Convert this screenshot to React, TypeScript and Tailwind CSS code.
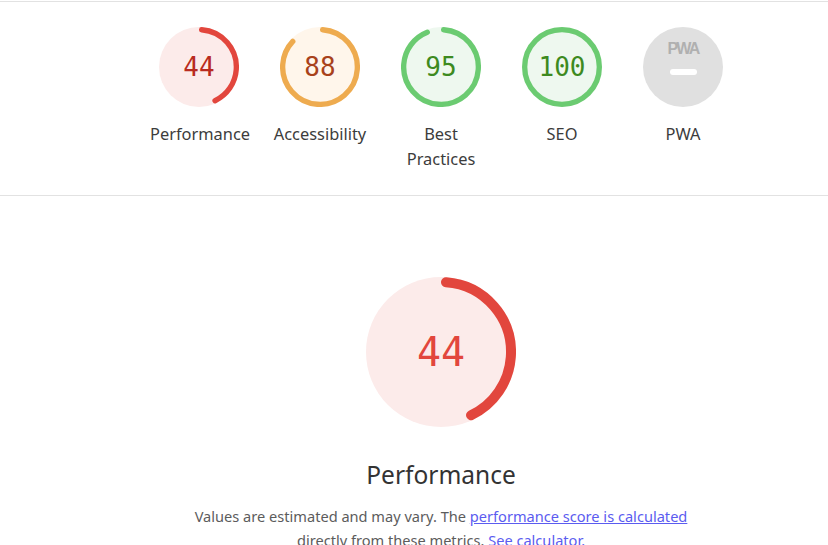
const scores = [
  { label: "Performance", score: 44, tone: "fail" },
  { label: "Accessibility", score: 88, tone: "average" },
  { label: "Best Practices", score: 95, tone: "pass" },
  { label: "SEO", score: 100, tone: "pass" },
];

const tones: Record<string, { arc: string; fill: string; text: string }> = {
  fail: { arc: "#e2463d", fill: "#fcebea", text: "#b92b20" },
  average: { arc: "#eeab4f", fill: "#fff6eb", text: "#a8421b" },
  pass: { arc: "#6bcb71", fill: "#eef8ef", text: "#3d8a20" },
};

function GaugeRing({ score, tone, size }: { score: number; tone: string; size: number }) {
  const c = tones[tone];
  const r = 56;
  const circ = 2 * Math.PI * r;
  const pct = score / 100;
  // nudge start so the round cap sits just right of 12 o'clock
  const capDeg = pct === 1 ? 0 : ((4 / r) * 180) / Math.PI;
  const len = pct === 1 ? circ : Math.max(pct * circ - 8, 0);
  return (
    <svg width={size} height={size} viewBox="0 0 120 120" className="block">
      <circle cx="60" cy="60" r="60" fill={c.fill} />
      <circle
        cx="60"
        cy="60"
        r={r}
        fill="none"
        stroke={c.arc}
        strokeWidth="8"
        strokeLinecap="round"
        strokeDasharray={`${len} ${circ}`}
        transform={`rotate(${-90 + capDeg} 60 60)`}
      />
    </svg>
  );
}

function SmallGauge({ label, score, tone }: { label: string; score: number; tone: string }) {
  return (
    <div className="flex w-[121px] flex-col items-center">
      <div className="relative h-[80px] w-[80px]">
        <GaugeRing score={score} tone={tone} size={80} />
        <div
          className="absolute inset-0 flex items-center justify-center text-[26px] font-['DejaVu_Sans_Mono',monospace]"
          style={{ color: tones[tone].text }}
        >
          {score}
        </div>
      </div>
      <div className="mt-[14px] w-[98px] text-center text-[16.4px] leading-[25px] text-[#3c3c3c]">{label}</div>
    </div>
  );
}

function PwaGauge() {
  return (
    <div className="flex w-[121px] flex-col items-center">
      <div className="flex h-[80px] w-[80px] flex-col items-center rounded-full bg-[#e0e0e0] pt-[13px]">
        <span className="text-[16px] font-black leading-[18px] tracking-[-1.8px] text-[#b0b0b0] font-['Liberation_Sans',sans-serif]">
          PWA
        </span>
        <span className="mt-[11px] h-[6px] w-[27px] rounded-full bg-white" />
      </div>
      <div className="mt-[14px] w-[98px] text-center text-[16.4px] leading-[25px] text-[#3c3c3c]">PWA</div>
    </div>
  );
}

export default function App() {
  return (
    <div className="h-[545px] w-[828px] overflow-hidden bg-white font-['Noto_Sans',sans-serif]">
      <div className="mt-px border-t border-[#e2e2e2]" />
      <div className="flex justify-center border-b border-[#e2e2e2] pb-[24px] pl-[54px] pt-[25px]">
        {scores.map((s) => (
          <SmallGauge key={s.label} {...s} />
        ))}
        <PwaGauge />
      </div>
      <div className="flex flex-col items-center pl-[54px] pt-[81px]">
        <div className="relative h-[150px] w-[150px]">
          <GaugeRing score={44} tone="fail" size={150} />
          <div className="absolute inset-0 flex items-center justify-center text-[40px] text-[#e2463d] font-['DejaVu_Sans_Mono',monospace]">
            44
          </div>
        </div>
        <h2 className="mt-[32px] text-[24.5px] leading-[32px] text-[#333]">Performance</h2>
        <p className="mt-[13px] w-[520px] text-center text-[14.6px] leading-[24px] text-[#5c5c5c]">
          Values are estimated and may vary. The{" "}
          <a href="#" className="text-[#5b5cf0] underline">
            performance score is calculated
          </a>{" "}
          directly from these metrics.{" "}
          <a href="#" className="text-[#5b5cf0] underline">
            See calculator.
          </a>
        </p>
      </div>
    </div>
  );
}
